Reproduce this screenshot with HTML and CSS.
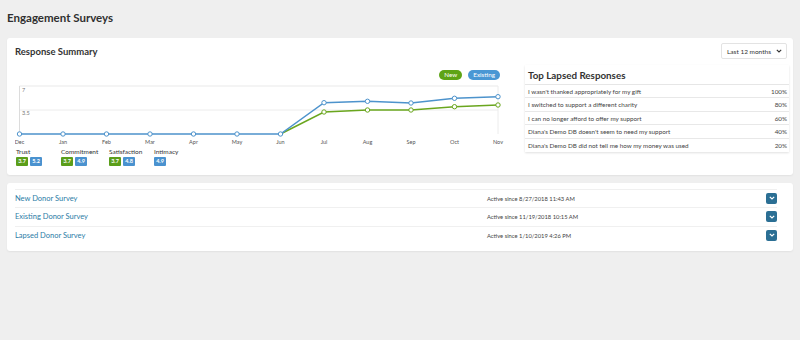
FILE: index.html
```html
<!DOCTYPE html>
<html lang="en">

<head>
  <meta charset="UTF-8">
  <meta name="viewport" content="width=device-width, initial-scale=1.0">
  <title>Engagement Surveys</title>
  <link rel="stylesheet" href="styles.css">
</head>

<body>
  <h1 class="page-title">Engagement Surveys</h1>

  <!-- summary card -->
  <div class="card summary">
    <div class="card-head">
      <h2 class="card-title">Response Summary</h2>
      <div class="select">Last 12 months
        <svg class="select-caret" width="6" height="4" viewBox="0 0 6 4"><path d="M0.8 0.8 L3 3 L5.2 0.8" fill="none" stroke="#333" stroke-width="1.1"/></svg>
      </div>
    </div>

    <div class="summary-body">
      <div class="chart-col">
        <div class="legend">
          <span class="pill green">New</span>
          <span class="pill blue">Existing</span>
        </div>

        <svg class="chart" width="490" height="62" viewBox="0 0 490 62">
          <!-- grid -->
          <line x1="4.5" y1="2" x2="483" y2="2" stroke="#e9e9e9" stroke-width="1"/>
          <line x1="4.5" y1="26" x2="483" y2="26" stroke="#ececec" stroke-width="1"/>
          <line x1="483" y1="2" x2="483" y2="50" stroke="#ececec" stroke-width="1"/>
          <line x1="4.5" y1="2" x2="4.5" y2="50" stroke="#dcdcdc" stroke-width="1"/>
          <text class="axis" x="7" y="8">7</text>
          <text class="axis" x="7" y="31">3.5</text>

          <!-- new -->
          <polyline fill="none" stroke="#6aa61e" stroke-width="1.5"
            points="265.5,50 309,28 352.5,26 396,26 439.5,22.7 483,21"/>
          <g fill="#fff" stroke="#6aa61e" stroke-width="1">
            <circle cx="309" cy="28" r="2.2"/>
            <circle cx="352.5" cy="26" r="2.2"/>
            <circle cx="396" cy="26" r="2.2"/>
            <circle cx="439.5" cy="22.7" r="2.2"/>
            <circle cx="483" cy="21" r="2.2"/>
          </g>

          <!-- existing -->
          <polyline fill="none" stroke="#4d93cc" stroke-width="1.5"
            points="4.5,50 48,50 91.5,50 135,50 178.5,50 222,50 265.5,50 309,18.7 352.5,17.3 396,19 439.5,14.3 483,12.7"/>
          <g fill="#fff" stroke="#4d93cc" stroke-width="1">
            <circle cx="4.5" cy="50" r="2.2"/>
            <circle cx="48" cy="50" r="2.2"/>
            <circle cx="91.5" cy="50" r="2.2"/>
            <circle cx="135" cy="50" r="2.2"/>
            <circle cx="178.5" cy="50" r="2.2"/>
            <circle cx="222" cy="50" r="2.2"/>
            <circle cx="265.5" cy="50" r="2.2"/>
            <circle cx="309" cy="18.7" r="2.2"/>
            <circle cx="352.5" cy="17.3" r="2.2"/>
            <circle cx="396" cy="19" r="2.2"/>
            <circle cx="439.5" cy="14.3" r="2.2"/>
            <circle cx="483" cy="12.7" r="2.2"/>
          </g>

          <!-- months -->
          <g class="month" text-anchor="middle">
            <text x="4.5" y="60">Dec</text>
            <text x="48" y="60">Jan</text>
            <text x="91.5" y="60">Feb</text>
            <text x="135" y="60">Mar</text>
            <text x="178.5" y="60">Apr</text>
            <text x="222" y="60">May</text>
            <text x="265.5" y="60">Jun</text>
            <text x="309" y="60">Jul</text>
            <text x="352.5" y="60">Aug</text>
            <text x="396" y="60">Sep</text>
            <text x="439.5" y="60">Oct</text>
            <text x="483" y="60">Nov</text>
          </g>
        </svg>

        <div class="scores">
          <div class="score trust">
            <div class="score-name">Trust</div>
            <div class="badges"><span class="badge green">3.7</span><span class="badge blue">5.2</span></div>
          </div>
          <div class="score commitment">
            <div class="score-name">Commitment</div>
            <div class="badges"><span class="badge green">3.7</span><span class="badge blue">4.9</span></div>
          </div>
          <div class="score satisfaction">
            <div class="score-name">Satisfaction</div>
            <div class="badges"><span class="badge green">3.7</span><span class="badge blue">4.8</span></div>
          </div>
          <div class="score">
            <div class="score-name">Intimacy</div>
            <div class="badges"><span class="badge blue">4.9</span></div>
          </div>
        </div>
      </div>

      <div class="lapsed">
        <h3 class="lapsed-title">Top Lapsed Responses</h3>
        <ul class="lapsed-list">
          <li class="lapsed-row"><span>I wasn't thanked appropriately for my gift</span><span>100%</span></li>
          <li class="lapsed-row"><span>I switched to support a different charity</span><span>80%</span></li>
          <li class="lapsed-row"><span>I can no longer afford to offer my support</span><span>60%</span></li>
          <li class="lapsed-row"><span>Diana's Demo DB doesn't seem to need my support</span><span>40%</span></li>
          <li class="lapsed-row"><span>Diana's Demo DB did not tell me how my money was used</span><span>20%</span></li>
        </ul>
      </div>
    </div>
  </div>

  <!-- survey list -->
  <div class="card surveys">
    <div class="survey-row">
      <a class="survey-name" href="#">New Donor Survey</a>
      <span class="survey-since">Active since 8/27/2018 11:43 AM</span>
      <button class="toggle"><svg width="6" height="4" viewBox="0 0 6 4"><path d="M0.8 0.8 L3 3 L5.2 0.8" fill="none" stroke="#fff" stroke-width="1.2"/></svg></button>
    </div>
    <div class="survey-row">
      <a class="survey-name" href="#">Existing Donor Survey</a>
      <span class="survey-since">Active since 11/19/2018 10:15 AM</span>
      <button class="toggle"><svg width="6" height="4" viewBox="0 0 6 4"><path d="M0.8 0.8 L3 3 L5.2 0.8" fill="none" stroke="#fff" stroke-width="1.2"/></svg></button>
    </div>
    <div class="survey-row">
      <a class="survey-name" href="#">Lapsed Donor Survey</a>
      <span class="survey-since">Active since 1/10/2019 4:26 PM</span>
      <button class="toggle"><svg width="6" height="4" viewBox="0 0 6 4"><path d="M0.8 0.8 L3 3 L5.2 0.8" fill="none" stroke="#fff" stroke-width="1.2"/></svg></button>
    </div>
  </div>
</body>

</html>
```

FILE: styles.css
```css
* {
  margin: 0;
  padding: 0;
  box-sizing: border-box;
}

body {
  padding: 7px;
  background-color: #efefef;
  font-family: Lato, "Open Sans", sans-serif;
  color: #333;
}

.page-title {
  margin-top: 3px;
  height: 15px;
  line-height: 15px;
  font-size: 11.5px;
  font-weight: 700;
  color: #2f2f2f;
}

.card {
  background-color: #fff;
  border-radius: 3px;
  box-shadow: 0 1px 2px rgba(0, 0, 0, 0.06);
}

.summary {
  margin-top: 13px;
  height: 137px;
  padding: 5px 6px 0 8px;
}

.card-head {
  display: flex;
  justify-content: space-between;
  align-items: center;
  height: 16px;
}

.card-title {
  font-size: 9.5px;
  font-weight: 700;
  color: #333;
}

.select {
  display: flex;
  align-items: center;
  justify-content: space-between;
  width: 66px;
  height: 16px;
  padding: 0 4px 0 5px;
  border: 1px solid #e3e3e3;
  border-radius: 2px;
  font-size: 6.5px;
  color: #333;
}

.summary-body {
  display: flex;
  justify-content: space-between;
  margin-top: 5px;
}

.chart-col {
  width: 490px;
}

.legend {
  display: flex;
  justify-content: flex-end;
  gap: 6px;
  height: 20px;
  padding: 6px 5px 0 0;
}

.pill {
  height: 10px;
  line-height: 10px;
  padding: 0 5px;
  border-radius: 5px;
  font-size: 6.3px;
  color: #fff;
}

.pill.green {
  background-color: #5ea416;
}

.pill.blue {
  background-color: #4a97d4;
}

.chart {
  display: block;
}

.chart .axis {
  font-size: 5.5px;
  fill: #777;
}

.chart .month text {
  font-size: 5.5px;
  fill: #555;
}

.scores {
  display: flex;
  margin-left: 1px;
  margin-top: 2px;
}

.score {
  width: 45px;
}

.score.commitment {
  width: 48px;
}

.score-name {
  height: 9px;
  line-height: 8px;
  font-size: 6.5px;
  color: #333;
}

.badges {
  display: flex;
  gap: 2px;
}

.badge {
  width: 12px;
  height: 9px;
  line-height: 9px;
  border-radius: 1px;
  text-align: center;
  font-size: 5.5px;
  font-weight: 700;
  color: #fff;
}

.badge.green {
  background-color: #5b9e1a;
}

.badge.blue {
  background-color: #4a92cf;
}

.lapsed {
  width: 264px;
  height: 87px;
  margin-top: 1px;
  margin-right: -2px;
  box-shadow: 0 1px 2px rgba(0, 0, 0, 0.12);
}

.lapsed-title {
  height: 20px;
  line-height: 20px;
  padding-left: 3px;
  border-bottom: 1px solid #e6e6e6;
  font-size: 9.8px;
  font-weight: 700;
  color: #333;
}

.lapsed-list {
  list-style: none;
}

.lapsed-row {
  display: flex;
  justify-content: space-between;
  height: 13.4px;
  line-height: 13px;
  padding: 0 2px 0 3px;
  border-bottom: 1px solid #e8e8e8;
  font-size: 6.3px;
  color: #444;
}

.lapsed-row:last-child {
  border-bottom: none;
}

.surveys {
  margin-top: 8px;
  padding: 5.5px 16px 7px 8px;
}

.survey-row {
  display: grid;
  grid-template-columns: 472px 1fr auto;
  align-items: center;
  height: 18.5px;
  border-top: 1px solid #f0f0f0;
}

.survey-name {
  font-size: 7.5px;
  color: #2b7ca6;
  text-decoration: none;
}

.survey-since {
  font-size: 5.8px;
  color: #444;
}

.toggle {
  display: flex;
  align-items: center;
  justify-content: center;
  width: 11px;
  height: 11px;
  border: none;
  border-radius: 2px;
  background-color: #2b6f94;
}
```
